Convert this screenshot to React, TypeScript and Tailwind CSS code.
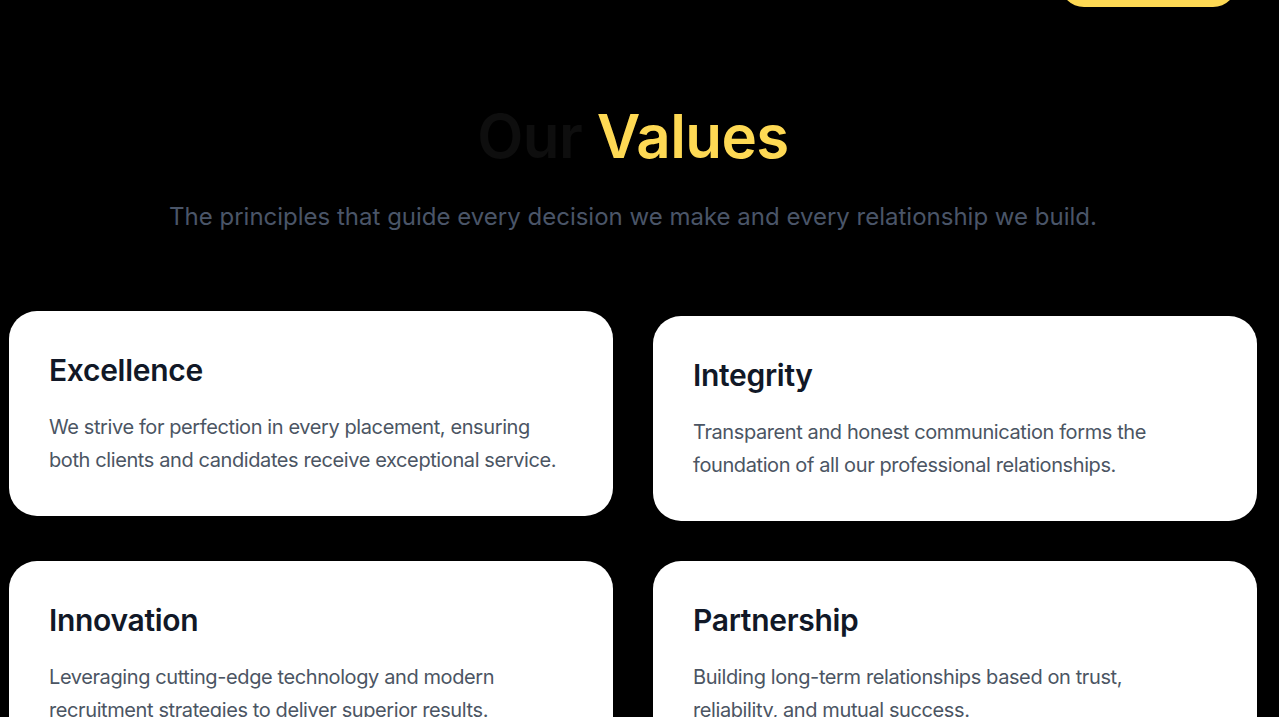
const values = [
  {
    title: 'Excellence',
    text: 'We strive for perfection in every placement, ensuring both clients and candidates receive exceptional service.',
    lift: true,
  },
  {
    title: 'Integrity',
    text: 'Transparent and honest communication forms the foundation of all our professional relationships.',
    lift: false,
  },
  {
    title: 'Innovation',
    text: 'Leveraging cutting-edge technology and modern recruitment strategies to deliver superior results.',
    lift: false,
  },
  {
    title: 'Partnership',
    text: 'Building long-term relationships based on trust, reliability, and mutual success.',
    lift: false,
  },
];

function ValueCard({ title, text, lift }: { title: string; text: string; lift: boolean }) {
  return (
    <div className={`bg-white rounded-[28px] p-10 ${lift ? '-translate-y-[5px]' : ''}`}>
      <h3 className="text-[30px] leading-[38px] font-semibold text-[#111827] mb-[22px] tracking-[-0.01em]">{title}</h3>
      <p className="max-w-[512px] text-[20px] leading-[32.5px] text-[#4b5563] tracking-[-0.02em]">{text}</p>
    </div>
  );
}

export default function App() {
  return (
    <div
      className="bg-black min-h-[717px] w-full overflow-hidden"
      style={{ fontFamily: 'Inter, "Noto Sans", sans-serif' }}
    >
      <div className="w-[1266px]">
        <div className="flex justify-end pr-[29px]">
          <div className="-mt-[41px] h-12 w-[177px] rounded-full bg-[#fed954]" />
        </div>

        <section className="pt-[97px] px-[9px]">
          <div className="text-center">
            <h2 className="text-[60px] leading-[64px] font-semibold tracking-[-0.01em]">
              <span className="text-[#0e0e0e]">Our</span> <span className="text-[#fed954]">Values</span>
            </h2>
            <p className="mt-[33px] text-[24px] leading-8 text-[#4a5568] whitespace-nowrap">
              The principles that guide every decision we make and every relationship we build.
            </p>
          </div>

          <div className="grid grid-cols-2 gap-10 mt-[83px]">
            {values.map((v) => (
              <ValueCard key={v.title} {...v} />
            ))}
          </div>
        </section>
      </div>
    </div>
  );
}
